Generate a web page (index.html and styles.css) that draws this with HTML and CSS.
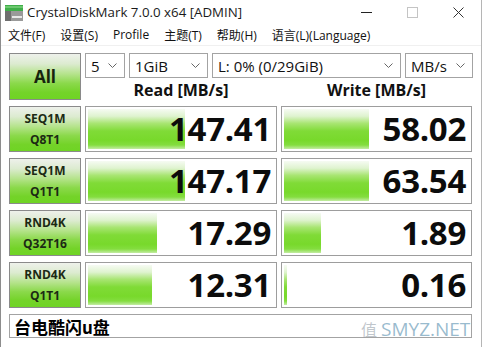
FILE: index.html
```html
<!DOCTYPE html>
<html lang="zh-CN">
<head>
<meta charset="utf-8">
<title>CrystalDiskMark 7.0.0 x64 [ADMIN]</title>
<link rel="stylesheet" href="styles.css">
</head>
<body>
<div class="window">
  <div class="titlebar">
    <svg class="app-icon" width="18" height="16" viewBox="0 0 18 16">
      <rect x="0" y="0" width="18" height="6" fill="#3fae49"/>
      <rect x="0" y="1" width="18" height="2" fill="#6cc86f"/>
      <rect x="0" y="6" width="18" height="10" fill="#9a9a9a"/>
      <rect x="0" y="6" width="6" height="10" fill="#6f6f6f"/>
      <rect x="7" y="11" width="10" height="2" fill="#e8e8e8"/>
    </svg>
    <span class="title">CrystalDiskMark 7.0.0 x64 [ADMIN]</span>
    <div class="win-controls">
      <span class="wc"><svg width="11" height="11" viewBox="0 0 11 11"><line x1="0" y1="5.5" x2="11" y2="5.5" stroke="#222" stroke-width="1"/></svg></span>
      <span class="wc"><svg width="11" height="11" viewBox="0 0 11 11"><rect x="0.5" y="0.5" width="10" height="10" fill="none" stroke="#c4c4c4" stroke-width="1"/></svg></span>
      <span class="wc"><svg width="11" height="11" viewBox="0 0 11 11"><path d="M0.5 0.5 L10.5 10.5 M10.5 0.5 L0.5 10.5" stroke="#333" stroke-width="1"/></svg></span>
    </div>
  </div>
  <nav class="menubar">
    <span class="menu-item">文件(F)</span>
    <span class="menu-item">设置(S)</span>
    <span class="menu-item">Profile</span>
    <span class="menu-item">主题(T)</span>
    <span class="menu-item">帮助(H)</span>
    <span class="menu-item">语言(L)(Language)</span>
  </nav>
  <main class="board">
    <div class="label all">All</div>
    <div class="top">
      <div class="selects">
        <div class="select s-count"><span>5</span><svg class="chev" width="9" height="5" viewBox="0 0 9 5"><polyline points="0.5,0.5 4.5,4.5 8.5,0.5" fill="none" stroke="#666" stroke-width="1"/></svg></div>
        <div class="select s-size"><span>1GiB</span><svg class="chev" width="9" height="5" viewBox="0 0 9 5"><polyline points="0.5,0.5 4.5,4.5 8.5,0.5" fill="none" stroke="#666" stroke-width="1"/></svg></div>
        <div class="select s-drive"><span>L: 0% (0/29GiB)</span><svg class="chev" width="9" height="5" viewBox="0 0 9 5"><polyline points="0.5,0.5 4.5,4.5 8.5,0.5" fill="none" stroke="#666" stroke-width="1"/></svg></div>
        <div class="select s-unit"><span>MB/s</span><svg class="chev" width="9" height="5" viewBox="0 0 9 5"><polyline points="0.5,0.5 4.5,4.5 8.5,0.5" fill="none" stroke="#666" stroke-width="1"/></svg></div>
      </div>
      <div class="headers">
        <div class="head">Read [MB/s]</div>
        <div class="head">Write [MB/s]</div>
      </div>
    </div>

    <div class="label">SEQ1M<br>Q8T1</div>
    <div class="cell"><div class="bar" style="width:97px"></div><div class="num">147.41</div></div>
    <div class="cell"><div class="bar" style="width:85px"></div><div class="num">58.02</div></div>

    <div class="label">SEQ1M<br>Q1T1</div>
    <div class="cell"><div class="bar" style="width:97px"></div><div class="num">147.17</div></div>
    <div class="cell"><div class="bar" style="width:85px"></div><div class="num">63.54</div></div>

    <div class="label">RND4K<br>Q32T16</div>
    <div class="cell"><div class="bar" style="width:69px"></div><div class="num">17.29</div></div>
    <div class="cell"><div class="bar" style="width:37px"></div><div class="num">1.89</div></div>

    <div class="label">RND4K<br>Q1T1</div>
    <div class="cell"><div class="bar" style="width:64px"></div><div class="num">12.31</div></div>
    <div class="cell"><div class="bar" style="width:3px"></div><div class="num">0.16</div></div>

    <div class="comment">台电酷闪u盘</div>
  </main>
  <div class="watermark"><span class="wm-mark">值</span>SMYZ.NET</div>
</div>
</body>
</html>
```
FILE: styles.css
```css
* { box-sizing: border-box; }
html, body { margin: 0; padding: 0; background: #ffffff; }
body {
  font-family: "Open Sans", "Noto Sans", "Noto Sans CJK SC", sans-serif;
  color: #000;
}
.window {
  position: relative;
  width: 482px;
  height: 347px;
  background: #ffffff;
  border-left: 1px solid #8d8d8d;
  border-right: 1px solid #b5b5b5;
  overflow: hidden;
}
.titlebar {
  height: 24px;
  display: flex;
  align-items: center;
  padding-left: 4px;
}
.app-icon { flex: none; margin-top: 1px; }
.title {
  margin-left: 4px;
  font-size: 13.3px;
  color: #1a1a1a;
}
.win-controls {
  margin-left: auto;
  display: flex;
  height: 24px;
}
.wc {
  width: 46px;
  display: flex;
  align-items: center;
  justify-content: center;
}
.menubar {
  height: 22px;
  display: flex;
  align-items: center;
  padding-left: 7px;
  font-family: "Open Sans", "Noto Sans CJK SC", sans-serif;
  font-size: 12px;
  color: #111;
  border-bottom: 1px solid #f0f0f0;
}
.menu-item { margin-right: 15px; }
.board {
  display: grid;
  grid-template-columns: 72px 192px 191px;
  grid-template-rows: 47px repeat(4, 46px) 24px;
  column-gap: 4px;
  row-gap: 6px;
  padding: 7px 0 0 8px;
}
.label {
  border: 1px solid #8a8a8a;
  background: linear-gradient(to bottom, #eef1eb 0%, #dcebd0 22%, #b4e38a 45%, #8bd94b 65%, #74d329 85%, #6fd424 100%);
  display: flex;
  align-items: center;
  justify-content: center;
  text-align: center;
  font-weight: 700;
  font-size: 12px;
  line-height: 21px;
  color: #1c2a14;
}
.label.all {
  font-size: 17px;
  color: #16240e;
}
.top {
  grid-column: 2 / 4;
  display: grid;
  grid-template-rows: 25px 22px;
}
.selects {
  display: flex;
  gap: 4px;
}
.select {
  border: 1px solid #a3a3a3;
  background: #fff;
  display: flex;
  align-items: center;
  justify-content: space-between;
  padding: 0 7px 0 5px;
  font-size: 15px;
  color: #111;
}
.s-count { width: 40px; }
.s-size { width: 79px; }
.s-drive { width: 189px; }
.s-unit { width: 68px; }
.chev { flex: none; }
.headers {
  display: grid;
  grid-template-columns: 192px 191px;
  column-gap: 4px;
  align-items: end;
}
.head {
  text-align: center;
  font-weight: 700;
  font-size: 16px;
  line-height: 20px;
  color: #111;
}
.cell {
  border: 1px solid #9d9d9d;
  background: #fff;
  padding: 2px;
  display: grid;
  grid-template-columns: 1fr;
  grid-template-rows: 1fr;
}
.bar {
  grid-area: 1 / 1;
  height: 100%;
  background: linear-gradient(to bottom, #f6fbf3 0%, #dff3cf 18%, #a8e572 36%, #80db37 55%, #78d92b 78%, #84dd3f 90%, #c3eca3 100%);
}
.num {
  grid-area: 1 / 1;
  justify-self: end;
  align-self: center;
  padding-right: 3px;
  font-weight: 700;
  font-size: 33px;
  line-height: 40px;
  color: #0c0c0c;
  letter-spacing: -0.3px;
}
.comment {
  grid-column: 1 / 4;
  border: 1px solid #a3a3a3;
  display: flex;
  align-items: center;
  padding-left: 4px;
  font-family: "Noto Sans CJK SC", sans-serif;
  font-weight: 700;
  font-size: 17px;
  color: #000;
}
.watermark {
  position: absolute;
  left: 360px;
  top: 316px;
  font-family: "Open Sans", sans-serif;
  font-size: 19px;
  color: rgba(120, 165, 190, 0.75);
  display: flex;
  align-items: center;
  gap: 4px;
}
.wm-mark {
  font-family: "Noto Sans CJK SC", sans-serif;
  font-size: 16px;
  color: rgba(150, 160, 170, 0.6);
}
```
